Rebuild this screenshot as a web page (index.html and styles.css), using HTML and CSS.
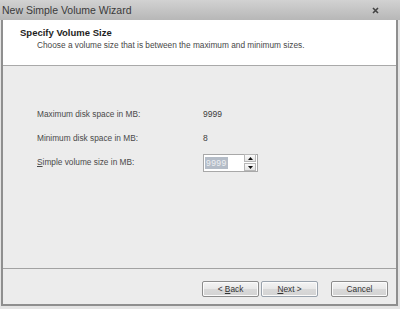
FILE: index.html
```html
<!DOCTYPE html>
<html>
<head>
<meta charset="utf-8">
<link rel="stylesheet" href="styles.css">
</head>
<body>
<div class="window">
  <div class="titlebar">
    <span class="title">New Simple Volume Wizard</span>
    <svg class="close" width="7" height="7" viewBox="0 0 7 7"><path d="M1 1 L6 6 M6 1 L1 6" stroke="#444" stroke-width="1.6"/></svg>
  </div>
  <div class="frame">
    <div class="header">
      <div class="h-title">Specify Volume Size</div>
      <div class="h-sub">Choose a volume size that is between the maximum and minimum sizes.</div>
    </div>
    <div class="content">
      <div class="row"><span class="label">Maximum disk space in MB:</span><span class="value">9999</span></div>
      <div class="row"><span class="label">Minimum disk space in MB:</span><span class="value">8</span></div>
      <div class="row"><span class="label"><u>S</u>imple volume size in MB:</span>
        <div class="spin">
          <span class="spin-text"><span class="sel">9999</span></span>
          <div class="spin-btns">
            <span class="sbtn"><svg width="5" height="3" viewBox="0 0 5 3"><path d="M2.5 0 L5 3 L0 3 Z" fill="#111"/></svg></span>
            <span class="sbtn"><svg width="5" height="3" viewBox="0 0 5 3"><path d="M0 0 L5 0 L2.5 3 Z" fill="#111"/></svg></span>
          </div>
        </div>
      </div>
    </div>
    <div class="footer">
      <button class="btn btn-back">&lt; <u>B</u>ack</button>
      <button class="btn btn-next"><u>N</u>ext &gt;</button>
      <button class="btn btn-cancel">Cancel</button>
    </div>
  </div>
</div>
</body>
</html>
```
FILE: styles.css
```css
html, body {
  margin: 0;
  padding: 0;
}
body {
  width: 400px;
  height: 309px;
  background: #e4e4e4;
  font-family: "Liberation Sans", Arial, sans-serif;
  overflow: hidden;
}
.window {
  width: 400px;
}
.titlebar {
  height: 20px;
  background: linear-gradient(#d2d2d2, #b7b7b7);
  display: flex;
  align-items: center;
  justify-content: space-between;
  padding: 0 21px 0 2px;
  color: #3a3a3a;
  font-size: 10.5px;
}
.close {
  display: block;
}
.frame {
  margin: 0 2px 0 1px;
  border: 2px solid #8f8f8f;
  border-top: none;
  background: #ececec;
}
.header {
  height: 46px;
  background: #fff;
  border-bottom: 1px solid #a9a9a9;
  box-sizing: border-box;
  padding: 7px 0 0 17px;
}
.h-title {
  font-weight: bold;
  font-size: 9.5px;
  color: #1e1e1e;
  line-height: 12px;
}
.h-sub {
  font-size: 8.3px;
  color: #474747;
  line-height: 12px;
  padding-left: 17px;
}
.content {
  height: 202px;
  box-sizing: border-box;
  padding: 36px 0 0 34px;
  font-size: 8.3px;
  color: #4a4a4a;
}
.row {
  display: grid;
  grid-template-columns: 166px auto;
  align-items: center;
  height: 24px;
}
.value {
  color: #3c3c3c;
  font-size: 8.5px;
}
.spin {
  width: 55px;
  height: 18px;
  box-sizing: border-box;
  border: 1px solid #a8a8a8;
  background: #fff;
  display: flex;
  align-items: center;
  justify-content: space-between;
  padding: 0 1px 0 1px;
  margin-top: 1px;
}
.sel {
  background: #b4bcc7;
  color: #eef0f3;
  padding: 1px 1px;
  font-size: 8.5px;
  letter-spacing: 0.4px;
}
.spin-btns {
  display: flex;
  flex-direction: column;
  gap: 1px;
}
.sbtn {
  width: 10px;
  height: 6px;
  border: 1px solid #b8b8b8;
  background: linear-gradient(#fafafa, #e4e4e4);
  display: flex;
  align-items: center;
  justify-content: center;
}
.sbtn svg {
  display: block;
}
.footer {
  height: 36px;
  border-top: 1px solid #a2a2a2;
  box-sizing: border-box;
  display: flex;
  justify-content: flex-end;
  padding: 12px 8px 0 0;
  gap: 2px;
}
.btn {
  width: 57px;
  height: 16px;
  padding: 0;
  border: 1px solid #8c8c8c;
  border-radius: 2px;
  background: linear-gradient(#f4f4f4 0%, #e8e8e8 50%, #d9d9d9 51%, #d3d3d3 100%);
  font-family: "Liberation Sans", Arial, sans-serif;
  font-size: 8.3px;
  color: #333;
  box-shadow: inset 0 0 0 1px #fbfbfb;
}
.btn-next {
  border-color: #9aa3ad;
}
.btn-cancel {
  margin-left: 11px;
}
```
